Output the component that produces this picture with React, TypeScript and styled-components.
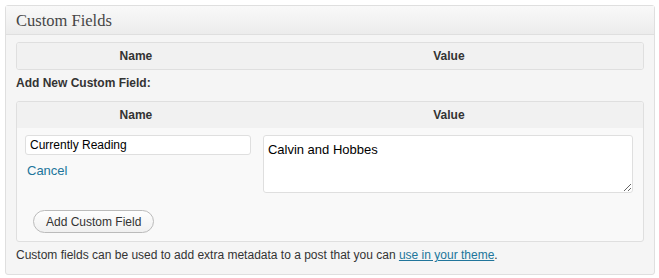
import React from 'react';
import styled, { createGlobalStyle } from 'styled-components';

const GlobalStyle = createGlobalStyle`
  body {
    margin: 0;
    background: #ffffff;
    font-family: "Liberation Sans", Arial, sans-serif;
    font-size: 12px;
    color: #333333;
  }
`;

const Postbox = styled.div`
  margin: 5px;
  width: 648px;
  border: 1px solid #dfdfdf;
  border-radius: 3px;
  background: #f5f5f5;
  box-shadow: 0 1px 0 #ffffff inset;
`;

const Handle = styled.h3`
  margin: 0;
  height: 28px;
  padding: 0 10px;
  border-bottom: 1px solid #dfdfdf;
  background: linear-gradient(to bottom, #f9f9f9, #ececec);
  font-family: "Liberation Serif", Georgia, serif;
  font-weight: normal;
  font-size: 16.5px;
  line-height: 29px;
  color: #464646;
`;

const Inside = styled.div`
  padding: 7px 10px 0;
`;

const FieldTable = styled.table`
  width: 100%;
  table-layout: fixed;
  border-collapse: separate;
  border-spacing: 0;
  border: 1px solid #dfdfdf;
  border-radius: 3px;
  background: #f9f9f9;
  overflow: hidden;
`;

const HeadCell = styled.th<{ $w?: string }>`
  width: ${(p) => p.$w ?? 'auto'};
  height: 26px;
  padding: 0;
  background: #f1f1f1;
  font-size: 12px;
  font-weight: bold;
  color: #333333;
  text-align: center;
  vertical-align: middle;
`;

const Cell = styled.td`
  padding: 7px 8px 0;
  vertical-align: top;
`;

const AddLabel = styled.p`
  margin: 0;
  height: 31px;
  line-height: 26px;
  font-weight: bold;
  font-size: 12px;
  color: #333333;
`;

const TextInput = styled.input`
  box-sizing: border-box;
  display: block;
  width: 226px;
  height: 20px;
  margin: 0;
  padding: 0 4px;
  border: 1px solid #dfdfdf;
  border-radius: 3px;
  background: #ffffff;
  font-family: "Liberation Sans", Arial, sans-serif;
  font-size: 12px;
  color: #000000;
  outline: none;
`;

const TextArea = styled.textarea`
  box-sizing: border-box;
  display: block;
  width: 370px;
  height: 58px;
  margin: 0;
  padding: 6px 4px;
  border: 1px solid #dfdfdf;
  border-radius: 3px;
  background: #ffffff;
  font-family: "Liberation Sans", Arial, sans-serif;
  font-size: 13px;
  color: #000000;
  outline: none;
`;

const CancelLink = styled.a`
  display: inline-block;
  margin: 8px 0 0 2px;
  font-size: 13px;
  color: #21759b;
  text-decoration: none;
`;

const SubmitRow = styled.td`
  padding: 17px 8px 8px 16px;
`;

const PillButton = styled.button`
  box-sizing: border-box;
  height: 23px;
  padding: 0 12px;
  border: 1px solid #bbbbbb;
  border-radius: 12px;
  background: linear-gradient(to bottom, #fefefe, #f0f0f0);
  font-family: "Liberation Sans", Arial, sans-serif;
  font-size: 12px;
  color: #333333;
  cursor: pointer;
`;

const Note = styled.p`
  margin: 0;
  padding: 6px 0 11px;
  font-size: 12px;
  line-height: 15px;
  color: #333333;
`;

const NoteLink = styled.a`
  color: #21759b;
  text-decoration: underline;
`;

function HeaderRow() {
  return (
    <tr>
      <HeadCell $w="38%">Name</HeadCell>
      <HeadCell>Value</HeadCell>
    </tr>
  );
}

export default function App() {
  return (
    <>
      <GlobalStyle />
      <Postbox>
        <Handle>Custom Fields</Handle>
        <Inside>
          <FieldTable>
            <thead>
              <HeaderRow />
            </thead>
          </FieldTable>

          <AddLabel>Add New Custom Field:</AddLabel>

          <FieldTable>
            <thead>
              <HeaderRow />
            </thead>
            <tbody>
              <tr>
                <Cell>
                  <TextInput defaultValue="Currently Reading" />
                  <CancelLink href="#">Cancel</CancelLink>
                </Cell>
                <Cell>
                  <TextArea defaultValue="Calvin and Hobbes" />
                </Cell>
              </tr>
              <tr>
                <SubmitRow colSpan={2}>
                  <PillButton type="button">Add Custom Field</PillButton>
                </SubmitRow>
              </tr>
            </tbody>
          </FieldTable>

          <Note>
            Custom fields can be used to add extra metadata to a post that you can{' '}
            <NoteLink href="#">use in your theme</NoteLink>.
          </Note>
        </Inside>
      </Postbox>
    </>
  );
}
